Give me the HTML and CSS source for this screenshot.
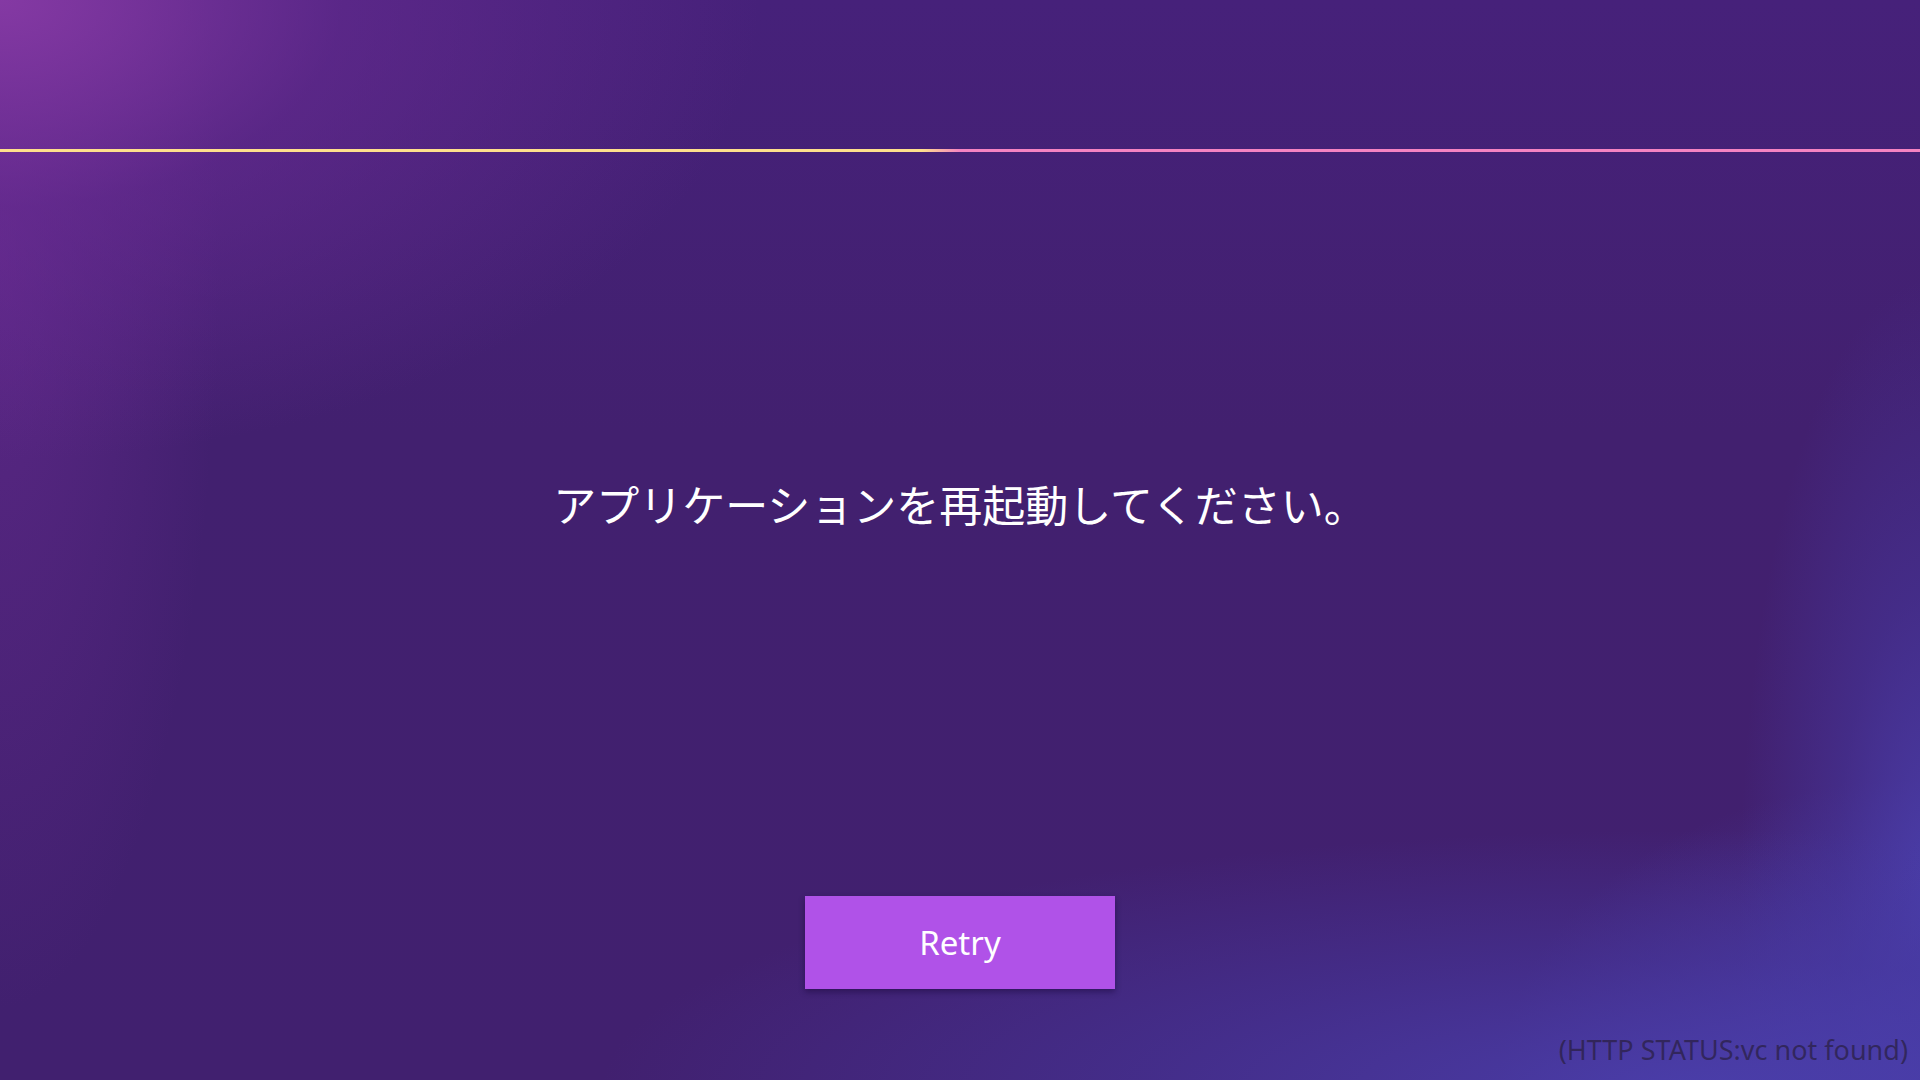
FILE: index.html
```html
<!DOCTYPE html>
<html lang="ja">
<head>
<meta charset="utf-8">
<title>Error</title>
<link rel="stylesheet" href="styles.css">
</head>
<body>
<div class="screen">
  <div class="header"></div>
  <div class="rule"></div>
  <main class="content">
    <p class="message">アプリケーションを再起動してください。</p>
    <button class="retry" type="button">Retry</button>
  </main>
  <footer class="status">(HTTP STATUS:vc not found)</footer>
</div>
</body>
</html>
```

FILE: styles.css
```css
html, body {
  margin: 0;
  padding: 0;
  width: 1920px;
  height: 1080px;
  overflow: hidden;
}

.screen {
  width: 1920px;
  height: 1080px;
  display: flex;
  flex-direction: column;
  font-family: "Noto Sans CJK JP", "Noto Sans", sans-serif;
  background:
    radial-gradient(ellipse 760px 460px at 0px 0px, rgba(135, 58, 165, 0.95) 0%, rgba(110, 45, 150, 0.5) 45%, rgba(80, 35, 125, 0) 100%),
    radial-gradient(ellipse 220px 760px at 0px 250px, rgba(110, 45, 150, 0.55) 0%, rgba(80, 35, 125, 0) 100%),
    radial-gradient(ellipse 1100px 260px at 1700px 1090px, rgba(74, 62, 170, 0.95) 0%, rgba(70, 56, 160, 0.55) 50%, rgba(66, 34, 118, 0) 100%),
    radial-gradient(ellipse 190px 620px at 1930px 900px, rgba(74, 62, 170, 0.95) 0%, rgba(70, 56, 160, 0.5) 50%, rgba(66, 34, 118, 0) 100%),
    radial-gradient(ellipse 420px 300px at 1920px 1080px, rgba(76, 66, 176, 1) 0%, rgba(66, 34, 118, 0) 100%),
    linear-gradient(180deg, #46217a 0%, #42206f 40%, #41206f 100%);
}

.header {
  height: 149px;
  flex: none;
}

.rule {
  height: 3px;
  flex: none;
  background: linear-gradient(90deg, #ffe08c 0%, #ffe08c 48%, #f583c2 50%, #f583c2 100%);
}

.content {
  flex: 1;
  display: flex;
  flex-direction: column;
  align-items: center;
}

.message {
  margin: 321px 0 0 0;
  font-size: 43px;
  line-height: 60px;
  font-weight: 400;
  color: #ffffff;
  letter-spacing: 0;
}

.retry {
  margin-top: 363px;
  width: 310px;
  height: 93px;
  border: none;
  border-radius: 0;
  background: #b052e8;
  color: #ffffff;
  font-family: "Noto Sans", "Open Sans", sans-serif;
  font-size: 33px;
  padding: 0;
  box-shadow: 0 3px 6px rgba(20, 5, 50, 0.45);
  cursor: pointer;
}

.status {
  flex: none;
  text-align: right;
  padding: 0 12px 15px 0;
  font-family: "Noto Sans", "Open Sans", sans-serif;
  font-size: 27px;
  line-height: 30px;
  color: rgba(35, 25, 45, 0.6);
}
```
